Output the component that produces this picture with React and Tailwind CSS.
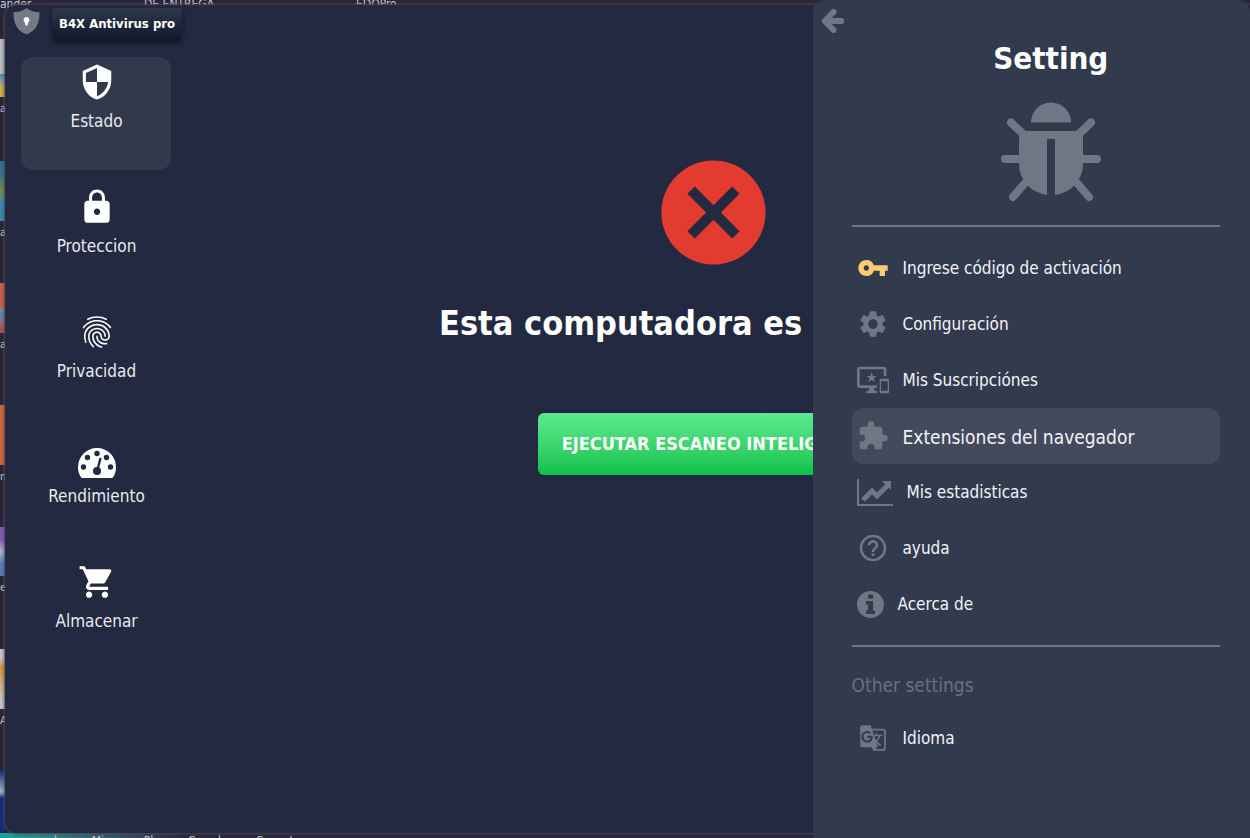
import { useState } from 'react';
import {
  MdCancel,
  MdExtension,
  MdFingerprint,
  MdGTranslate,
  MdHelpOutline,
  MdLock,
  MdOutlineImportantDevices,
  MdSecurity,
  MdSettings,
  MdShoppingCart,
  MdVpnKey,
} from 'react-icons/md';

const LogoIcon = () => (
  <svg viewBox="0 0 27 27" className="size-[27px]" aria-hidden="true">
    <path d="M13.5 0C10 3 5 4 .5 4.200C.3 14 3 22.500 13.500 26.500C24 22.500 26.700 14 26.500 4.200C22 4 17 3 13.500 0Z" fill="#757a88" />
    <path d="M13.500 9a3 3 0 0 1 1.600 5.500l-.6 3h-2l-.6-3A3 3 0 0 1 13.500 9Z" fill="#fff" />
  </svg>
);

const BackIcon = () => (
  <svg viewBox="0 0 24 24" className="size-6" fill="none" stroke="currentColor" strokeWidth="6" strokeLinejoin="round" aria-hidden="true">
    <path d="M12.500 3L3.800 12l8.700 9" strokeLinecap="round" />
    <path d="M4 12h17.500" />
    <path d="M21 11v2" strokeWidth="4" strokeLinecap="round" />
  </svg>
);

const BugIcon = () => (
  <svg viewBox="0 0 100 100" className="size-[100px]" fill="#717684" aria-hidden="true">
    <path d="M30 20.500a20 20 0 0 1 40 0Z" />
    <path d="M18 29h64v33a32 31 0 0 1-28 31V37h-8v56a32 31 0 0 1-28-31Z" />
    <path
      d="M22 32L10 20.500M78 32L90 20.500M20 57H4M80 57h16M24 81L12 95M76 81l12 14"
      fill="none"
      stroke="#717684"
      strokeWidth="8"
      strokeLinecap="round"
    />
  </svg>
);

const GaugeIcon = () => (
  <svg viewBox="0 0 38 30" className="h-[30px] w-[38px] self-end" aria-hidden="true">
    <path d="M19 0a19 19 0 0 1 19 19c0 4-1 7.500-3 10.300-.3.500-.8.700-1.300.7H4.300c-.5 0-1-.2-1.300-.7C1 26.500 0 23 0 19A19 19 0 0 1 19 0Z" fill="#fff" />
    <g fill="#222940">
      <circle cx="5.500" cy="19" r="2.700" />
      <circle cx="9.500" cy="9.500" r="2.700" />
      <circle cx="19" cy="5.500" r="2.700" />
      <circle cx="28.500" cy="9.500" r="2.700" />
      <circle cx="32.500" cy="19" r="2.700" />
      <circle cx="19" cy="23" r="4" />
    </g>
    <path d="M19.500 21.500L22.300 11" stroke="#222940" strokeWidth="2.400" strokeLinecap="round" />
  </svg>
);

const StatsIcon = () => (
  <svg viewBox="0 0 36 27" className="h-[27px] w-9" fill="none" stroke="currentColor" aria-hidden="true">
    <path d="M1 0v26h35" strokeWidth="2" />
    <path d="M6 21l9-9 5 5L31 6" strokeWidth="5" />
    <path d="M25 2h9v9Z" fill="currentColor" stroke="none" />
  </svg>
);

const InfoIcon = () => (
  <svg viewBox="0 0 27 27" className="size-[27px]" aria-hidden="true">
    <circle cx="13.500" cy="13.500" r="13.500" fill="currentColor" />
    <path d="M11 3.500h5v4h-5zM9 10h7v9.500h2v3.500H9v-3.500h2v-6H9z" fill="#323a4e" />
  </svg>
);

const navItems = [
  { id: 'estado', label: 'Estado', icon: <MdSecurity className="size-[38px]" /> },
  { id: 'proteccion', label: 'Proteccion', icon: <MdLock className="size-[38px]" /> },
  { id: 'privacidad', label: 'Privacidad', icon: <MdFingerprint className="size-[38px]" /> },
  { id: 'rendimiento', label: 'Rendimiento', icon: <GaugeIcon /> },
  { id: 'almacenar', label: 'Almacenar', icon: <MdShoppingCart className="size-[38px]" /> },
];

const menuItems = [
  { id: 'codigo', label: 'Ingrese código de activación', icon: <MdVpnKey className="size-8 text-[#ffcb73]" /> },
  { id: 'config', label: 'Configuración', icon: <MdSettings className="size-8" /> },
  { id: 'subs', label: 'Mis Suscripciónes', icon: <MdOutlineImportantDevices className="size-8" /> },
  { id: 'ext', label: 'Extensiones del navegador', icon: <MdExtension className="size-8" /> },
  { id: 'stats', label: 'Mis estadisticas', icon: <StatsIcon /> },
  { id: 'ayuda', label: 'ayuda', icon: <MdHelpOutline className="size-8" /> },
  { id: 'acerca', label: 'Acerca de', icon: <InfoIcon /> },
];

// Slices of desktop shortcuts visible left of the window
const shortcuts = [
  { name: 'ai', box: 'h-[58px] bg-linear-to-b from-[#b9bdc2] from-60% via-[#2f8ec4] via-60% to-[#d9ab45] to-85%' },
  { name: 'an', box: 'h-[60px] bg-linear-to-b from-[#35708f] from-20% via-[#6f8f3c] via-50% to-[#3a86ad] to-70%' },
  { name: 'an', box: 'h-[50px] bg-linear-to-b from-[#c75e4c] from-45% via-[#2f8ec4] via-60% to-[#b44d50] to-90%' },
  { name: 'm', box: 'h-[60px] bg-[#d1653c]' },
  { name: 'e', box: 'h-[49px] bg-linear-to-b from-[#8058b8] from-25% via-[#b0b4c8] via-50% to-[#5878c0] to-75%' },
  { name: 'A', box: 'h-[60px] bg-linear-to-b from-[#c4c6c8] from-15% via-[#d89530] via-30% to-[#c4c6c8] to-90%' },
  { name: '', box: 'h-[60px] bg-linear-to-b from-[#17307c] via-[#a8b4c8] via-35% to-[#142a80] to-45%' },
];

const Desktop = () => (
  <div className="absolute inset-0 flex flex-col overflow-hidden bg-[#28243a] text-xs text-[#c9c9cf]" aria-hidden="true">
    <div className="flex h-[5px] items-start gap-28 leading-[8px]">
      <span className="w-8">ander</span>
      <span className="w-[100px]">DE ENTREGA</span>
      <span>EDOPro</span>
    </div>
    <div className="flex w-[5px] flex-1 flex-col gap-[42px] overflow-hidden pt-[34px]">
      {shortcuts.map((item, index) => (
        <div key={index} className="h-20 shrink-0">
          <div className={item.box} />
          <div className="pt-1 text-[11px] leading-4">{item.name}</div>
        </div>
      ))}
    </div>
    <div className="flex h-[5px] gap-7 overflow-hidden bg-linear-to-r from-[#10a5a5] to-[#28243a] to-15% pl-[54px] pt-0.5 leading-3">
      <span>la</span>
      <span className="w-6">Mis</span>
      <span>Pla</span>
      <span className="w-10">Grand</span>
      <span>Capcut</span>
    </div>
  </div>
);

const Sidebar = ({ current, onSelect }) => (
  <nav className="flex w-[150px] shrink-0 flex-col gap-3">
    {navItems.map((item) => (
      <button
        key={item.id}
        onClick={() => onSelect(item.id)}
        className={`flex h-[113px] flex-col items-center rounded-xl pl-px pt-[6px] ${
          current === item.id ? 'bg-[#32394d]' : 'hover:bg-[#2a3147]'
        }`}
      >
        <span className="flex h-10 items-start text-white">{item.icon}</span>
        <span className="mt-1 text-[17px] leading-7 text-[#e9eaee]">{item.label}</span>
      </button>
    ))}
  </nav>
);

const MenuItem = ({ item, active, onSelect }) => (
  <button
    onClick={() => onSelect(item.id)}
    className={`flex h-14 w-full items-center gap-[14px] rounded-xl pl-[5px] text-left text-[#f3f3f6] ${
      active ? 'bg-[#424a5c] text-[19px]' : 'text-[17px]'
    }`}
  >
    <span className="shrink-0 text-[#717684]">{item.icon}</span>
    <span className="pt-0.5">{item.label}</span>
  </button>
);

const SettingsDrawer = () => {
  const [selected, setSelected] = useState('ext');

  return (
    <aside className="absolute inset-y-0 right-0 w-[35%] overflow-hidden rounded-t-xl bg-[#323a4e]">
      <button aria-label="Volver" className="ml-2 mt-[9px] block text-[#717684]">
        <BackIcon />
      </button>
      <div className="pl-[39px]">
        <div className="flex flex-col items-center gap-6 pt-[5px] text-white">
          <h2 className="text-[31px] font-bold leading-10">Setting</h2>
          <BugIcon />
        </div>
        <div className="mr-[30px]">
          <hr className="mb-[13px] mt-[23px] border-t-2 border-[#6f7584]" />
          {menuItems.map((item) => (
            <MenuItem key={item.id} item={item} active={selected === item.id} onSelect={setSelected} />
          ))}
          <hr className="mb-6 mt-[13px] border-t-2 border-[#6f7584]" />
          <h3 className="mb-[11px] text-[19px] leading-7 text-[#6a7080]">Other settings</h3>
          <MenuItem
            item={{ id: 'idioma', label: 'Idioma', icon: <MdGTranslate className="mx-0.5 size-7" /> }}
            active={selected === 'idioma'}
            onSelect={setSelected}
          />
        </div>
      </div>
    </aside>
  );
};

const App = () => {
  const [section, setSection] = useState('estado');

  return (
    <div className="relative h-screen overflow-hidden pb-[5px] pl-[5px] pt-[5px] font-['DejaVu_Sans_Condensed','DejaVu_Sans',sans-serif]">
      <Desktop />
      <div className="relative flex h-full flex-col rounded-l-xl bg-[#222940] shadow-[0_0_3px_1px_#4b4a50]">
        <header className="flex h-[52px] items-start gap-3 pl-2 pt-[3px]">
          <LogoIcon />
          <h1 className="rounded bg-linear-to-b from-[#30384c] to-[#11182c] px-[7px] py-1 text-[13px] font-bold leading-6 text-white shadow-md shadow-black/40">
            B4X Antivirus pro
          </h1>
        </header>
        <div className="flex flex-1 pl-4">
          <Sidebar current={section} onSelect={setSection} />
          <main className="flex flex-1 flex-col items-center pl-[5px] pt-[93px]">
            <MdCancel className="size-[125px] text-[#e43b30]" />
            <h2 className="mt-7 w-[548px] whitespace-nowrap text-[34px] font-bold leading-10 text-white">Esta computadora es</h2>
            <button className="mt-[70px] h-[62px] w-[350px] whitespace-nowrap rounded-md bg-linear-to-b from-[#5bea90] to-[#06c24a] text-lg font-bold text-white">
              EJECUTAR ESCANEO INTELIGENTE
            </button>
          </main>
        </div>
      </div>
      <SettingsDrawer />
    </div>
  );
};

export default App;
